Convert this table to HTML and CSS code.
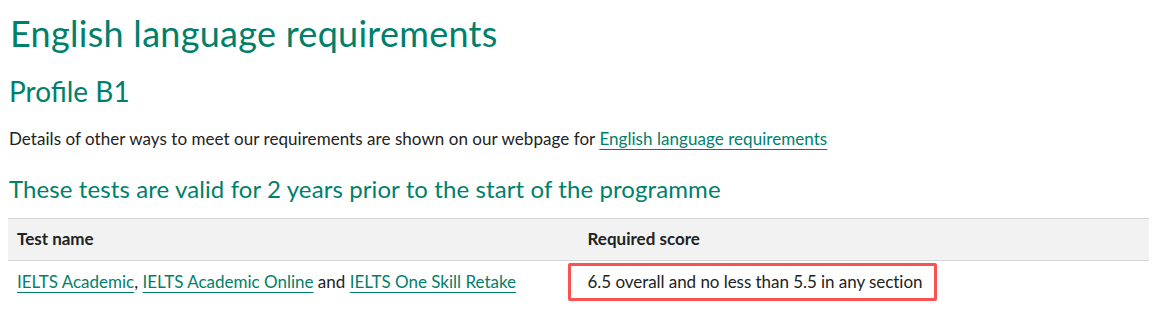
FILE: index.html
```html
<!DOCTYPE html>
<html lang="en">
<head>
<meta charset="utf-8">
<title>English language requirements</title>
<link rel="stylesheet" href="styles.css">
</head>
<body>
<main class="page">
  <h1 class="title">English language requirements</h1>
  <h2 class="profile">Profile B1</h2>
  <p class="intro">Details of other ways to meet our requirements are shown on our webpage for <a class="link" href="#">English language requirements</a></p>
  <h3 class="validity">These tests are valid for 2 years prior to the start of the programme</h3>
  <table class="tests">
    <thead>
      <tr>
        <th class="cell head">Test name</th>
        <th class="cell head">Required score</th>
      </tr>
    </thead>
    <tbody>
      <tr>
        <td class="cell body"><a class="link" href="#">IELTS Academic</a>, <a class="link" href="#">IELTS Academic Online</a> and <a class="link" href="#">IELTS One Skill Retake</a></td>
        <td class="cell body"><span class="highlight">6.5 overall and no less than 5.5 in any section</span></td>
      </tr>
    </tbody>
  </table>
</main>
</body>
</html>
```

FILE: styles.css
```css
html, body {
  margin: 0;
  padding: 0;
  background: #ffffff;
}

.page {
  padding: 11px 17px 8px 8px;
  font-family: Lato, "Noto Sans", sans-serif;
  color: #222222;
}

.title {
  margin: 0;
  font-size: 36px;
  line-height: 44px;
  font-weight: 400;
  letter-spacing: 0.28px;
  color: #00806b;
  padding-left: 2px;
}

.profile {
  margin: 19px 0 0 0;
  font-size: 28px;
  line-height: 34px;
  font-weight: 400;
  color: #00806b;
  padding-left: 1px;
}

.intro {
  margin: 19px 0 0 0;
  font-size: 17px;
  line-height: 24px;
  letter-spacing: 0.05px;
  padding-left: 1px;
}

.link {
  color: #00806b;
  text-decoration: underline;
  text-decoration-thickness: 1px;
  text-underline-offset: 4px;
}

.validity {
  margin: 23px 0 0 0;
  font-size: 24px;
  line-height: 30px;
  font-weight: 400;
  letter-spacing: 0.1px;
  color: #00806b;
  padding-left: 1px;
}

.tests {
  margin-top: 14px;
  width: 100%;
  border-collapse: collapse;
  table-layout: fixed;
  font-size: 17px;
}

.cell {
  width: 50%;
  padding: 9px 9px 10px 9px;
  text-align: left;
  vertical-align: top;
  line-height: 22px;
}

.body {
  padding-top: 10px;
}

.head {
  background: #f2f2f2;
  border-top: 1px solid #d6d6d6;
  border-bottom: 1px solid #d6d6d6;
  font-weight: 700;
  color: #222222;
}

.highlight {
  position: relative;
  letter-spacing: -0.05px;
}

.highlight::after {
  content: "";
  position: absolute;
  left: -20px;
  right: -15px;
  top: -8px;
  bottom: -9px;
  border: 3px solid #fa5252;
  border-radius: 2px;
}
```
